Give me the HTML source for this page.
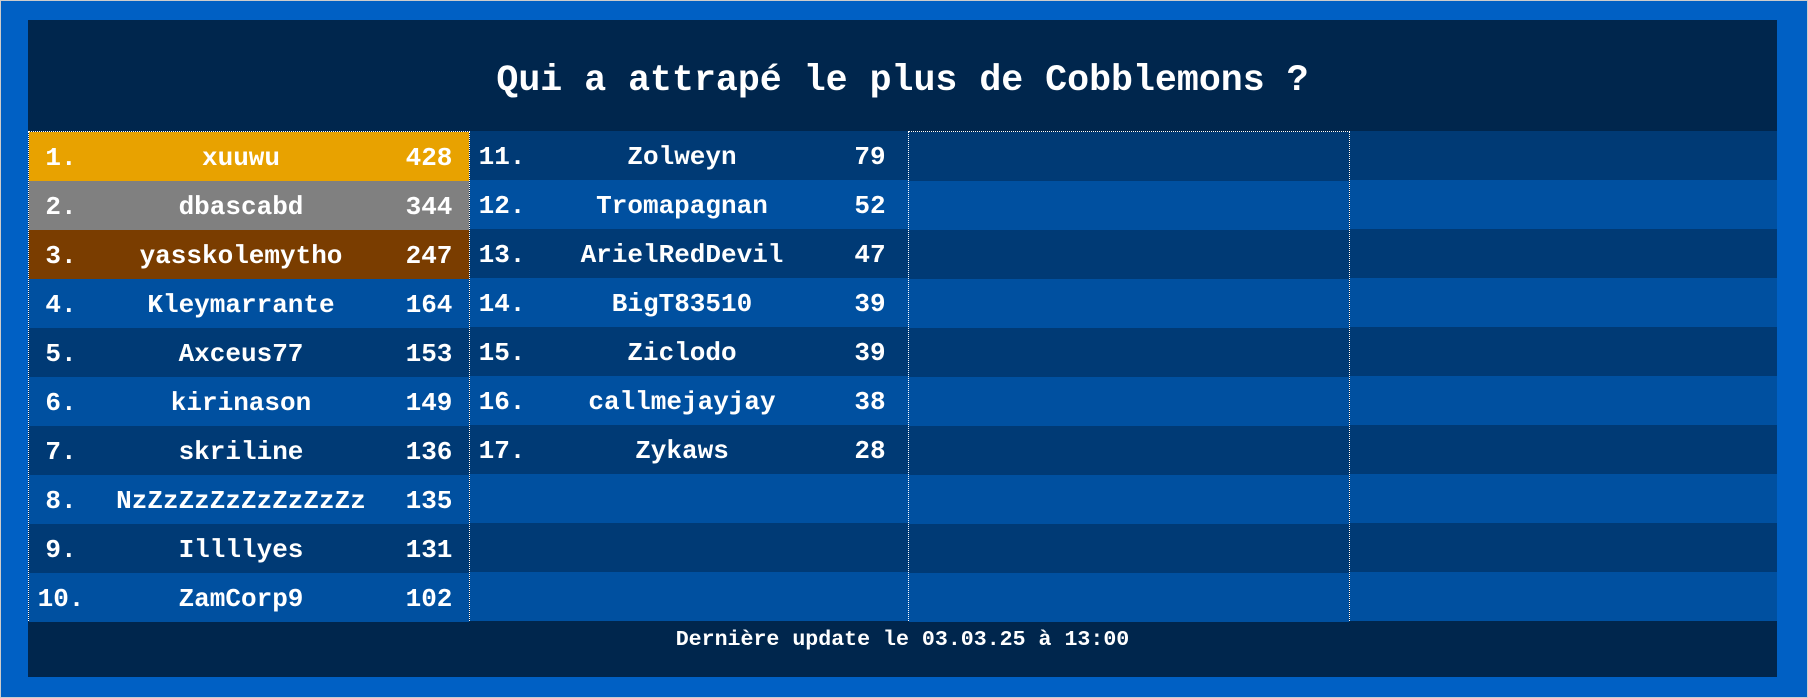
<!DOCTYPE html>
<html><head><meta charset="utf-8"><style>
html,body{margin:0;padding:0}
body{width:1808px;height:698px;background:#0060C4;position:relative;overflow:hidden;font-family:"Liberation Mono",monospace;font-weight:bold;color:#fff;box-sizing:border-box;border:1px solid #ccc}
.panel{position:absolute;left:27px;top:19px;width:1749px;height:657px;background:#00264D}
.title{position:absolute;left:0;top:0;width:100%;height:111px;line-height:121px;text-align:center;font-size:36.6px}
.col{position:absolute;top:111px;width:440px;height:490px}
.row{position:relative;height:49px;line-height:52px;font-size:26px}
.row:nth-child(odd){background:#003A75}
.row:nth-child(even){background:#0050A0}
.r{position:absolute;left:0;width:64px;text-align:center}
.n{position:absolute;left:64px;width:296px;text-align:center}
.s{position:absolute;left:360px;width:80px;text-align:center}
.dot{border:1px dotted #fff;box-sizing:border-box}
.foot{position:absolute;left:0;top:601px;width:100%;text-align:center;font-size:21.6px;line-height:28px;padding-top:5px}
</style></head><body>
<div class="panel">
<div class="title">Qui a attrapé le plus de Cobblemons ?</div>
<div class="col dot" style="left:0;width:442px">
<div class="row" style="background:#E8A200"><span class="r">1.</span><span class="n">xuuwu</span><span class="s">428</span></div>
<div class="row" style="background:#808080"><span class="r">2.</span><span class="n">dbascabd</span><span class="s">344</span></div>
<div class="row" style="background:#7A3D00"><span class="r">3.</span><span class="n">yasskolemytho</span><span class="s">247</span></div>
<div class="row"><span class="r">4.</span><span class="n">Kleymarrante</span><span class="s">164</span></div>
<div class="row"><span class="r">5.</span><span class="n">Axceus77</span><span class="s">153</span></div>
<div class="row"><span class="r">6.</span><span class="n">kirinason</span><span class="s">149</span></div>
<div class="row"><span class="r">7.</span><span class="n">skriline</span><span class="s">136</span></div>
<div class="row"><span class="r">8.</span><span class="n">NzZzZzZzZzZzZzZz</span><span class="s">135</span></div>
<div class="row"><span class="r">9.</span><span class="n">Illllyes</span><span class="s">131</span></div>
<div class="row"><span class="r">10.</span><span class="n">ZamCorp9</span><span class="s">102</span></div>
</div>
<div class="col" style="left:442px;width:439px">
<div class="row"><span class="r">11.</span><span class="n">Zolweyn</span><span class="s">79</span></div>
<div class="row"><span class="r">12.</span><span class="n">Tromapagnan</span><span class="s">52</span></div>
<div class="row"><span class="r">13.</span><span class="n">ArielRedDevil</span><span class="s">47</span></div>
<div class="row"><span class="r">14.</span><span class="n">BigT83510</span><span class="s">39</span></div>
<div class="row"><span class="r">15.</span><span class="n">Ziclodo</span><span class="s">39</span></div>
<div class="row"><span class="r">16.</span><span class="n">callmejayjay</span><span class="s">38</span></div>
<div class="row"><span class="r">17.</span><span class="n">Zykaws</span><span class="s">28</span></div>
<div class="row"></div><div class="row"></div><div class="row"></div>
</div>
<div class="col dot" style="left:880px;width:442px">
<div class="row"></div><div class="row"></div><div class="row"></div><div class="row"></div><div class="row"></div>
<div class="row"></div><div class="row"></div><div class="row"></div><div class="row"></div><div class="row"></div>
</div>
<div class="col" style="left:1322px;width:427px">
<div class="row"></div><div class="row"></div><div class="row"></div><div class="row"></div><div class="row"></div>
<div class="row"></div><div class="row"></div><div class="row"></div><div class="row"></div><div class="row"></div>
</div>
<div class="foot">Dernière update le 03.03.25 à 13:00</div>
</div>
</body></html>
